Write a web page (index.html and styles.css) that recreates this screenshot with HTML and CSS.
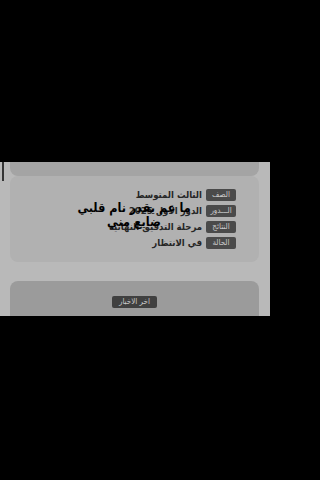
FILE: index.html
```html
<!DOCTYPE html>
<html lang="ar">
<head>
<meta charset="utf-8">
<link rel="stylesheet" href="styles.css">
</head>
<body>
<div class="frame">
  <div class="screen">
    <div class="scroll-ind"></div>
    <div class="content">
      <div class="top-card"></div>
      <div class="info-card" dir="rtl">
        <div class="row"><span class="tag">الصف</span><span class="val">الثالث المتوسط</span></div>
        <div class="row"><span class="tag">الـــدور</span><span class="val">الدور الاول 2025</span></div>
        <div class="row"><span class="tag">النتائج</span><span class="val">مرحلة التدقيق النهائية</span></div>
        <div class="row"><span class="tag">الحالة</span><span class="val">في الانتظار</span></div>
      </div>
      <div class="news-card" dir="rtl">
        <span class="news-btn">اخر الاخبار</span>
      </div>
    </div>
    <div class="caption" dir="rtl">ما عم يقدر نام قلبي<br>ضايع مني</div>
  </div>
</div>
</body>
</html>
```
FILE: styles.css
```css
html, body {
  margin: 0;
  padding: 0;
  background: #000;
}
body {
  width: 270px;
  height: 480px;
  font-family: "DejaVu Sans Condensed", "DejaVu Sans", sans-serif;
}
.frame {
  padding-top: 162px;
}
.screen {
  position: relative;
  height: 154px;
  overflow: hidden;
  background: #b9b9b9;
}
.scroll-ind {
  position: absolute;
  left: 2px;
  top: 0;
  width: 2px;
  height: 19px;
  background: #353535;
}
.content {
  display: flex;
  flex-direction: column;
  padding: 0 11px 0 10px;
}
.top-card {
  height: 14px;
  background: #a4a4a4;
  border-radius: 0 0 8px 8px;
}
.info-card {
  height: 86px;
  box-sizing: border-box;
  background: #b1b1b1;
  border-radius: 8px;
  padding: 13px 23px 0 0;
  display: flex;
  flex-direction: column;
  gap: 4px;
}
.row {
  display: flex;
  align-items: center;
  height: 12px;
  gap: 4px;
}
.tag {
  width: 30px;
  height: 12px;
  box-sizing: border-box;
  background: #4a4a4a;
  color: #cacaca;
  font-size: 8px;
  line-height: 12px;
  text-align: center;
  border-radius: 2px;
  white-space: nowrap;
  overflow: hidden;
}
.val {
  font-size: 9.5px;
  font-weight: bold;
  color: #262626;
  line-height: 12px;
  white-space: nowrap;
}
.news-card {
  margin-top: 19px;
  height: 50px;
  background: #9b9b9b;
  border-radius: 8px;
  display: flex;
  justify-content: center;
  align-items: flex-start;
  padding-top: 15px;
}
.news-btn {
  width: 45px;
  height: 12px;
  background: #404040;
  color: #cccccc;
  font-size: 8px;
  line-height: 12px;
  text-align: center;
  border-radius: 2px;
}
.caption {
  position: absolute;
  left: 0;
  right: 2px;
  top: 39px;
  text-align: center;
  font-size: 12.5px;
  font-weight: bold;
  color: #000;
  line-height: 14px;
}
```
